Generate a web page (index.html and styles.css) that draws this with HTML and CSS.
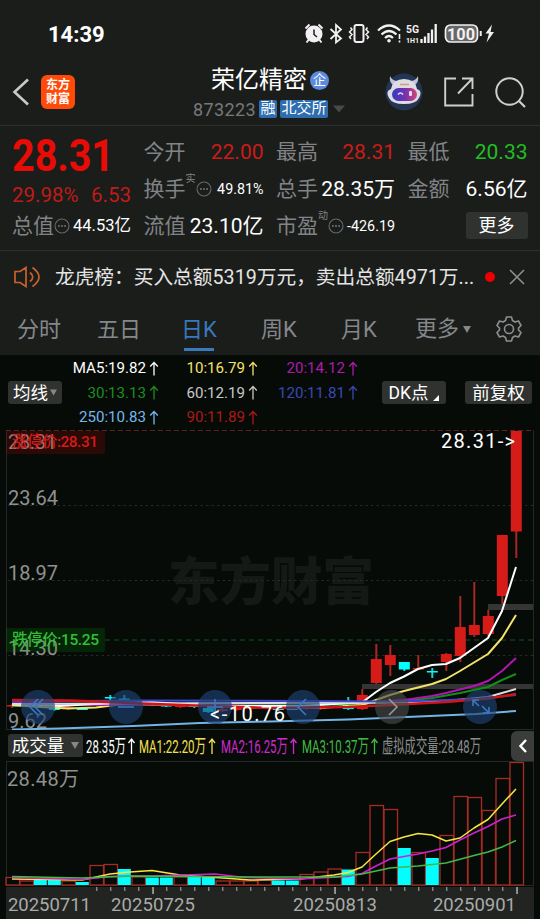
FILE: index.html
```html
<!DOCTYPE html>
<html lang="zh-CN">
<head>
    <meta charset="UTF-8">
    <meta name="viewport" content="width=device-width, initial-scale=1.0">
    <title>荣亿精密 873223</title>
    <link rel="stylesheet" href="styles.css">
</head>
<body>
    <svg class="defs" width="0" height="0">
        <symbol id="up" viewBox="0 0 10 15"><path d="M5 14.5V1.5M1.2 5.5L5 1.5L8.8 5.5" fill="none" stroke="currentColor" stroke-width="1.3"/></symbol>
        <symbol id="dots" viewBox="0 0 16 16"><circle cx="8" cy="8" r="7" fill="none" stroke="#66686a" stroke-width="1.1"/><path d="M4 7.2h1.8v1.6H4zM7.1 7.2h1.8v1.6H7.1zM10.2 7.2H12v1.6h-1.8z" fill="#77797b"/></symbol>
    </svg>

    <div class="status-bar">
        <span class="time">14:39</span>
        <svg class="status-icons" width="192" height="24" viewBox="304 22 192 24">
            <!-- alarm -->
            <circle cx="314" cy="34" r="8.5" fill="#f2f0f2"/>
            <path d="M305.5 28.5l4-4M322.5 28.5l-4-4M308.5 40l-2 2.5M319.5 40l2 2.5" stroke="#f2f0f2" stroke-width="2"/>
            <path d="M314 29.5V34.5L317 37" fill="none" stroke="#1b1d1b" stroke-width="1.5"/>
            <!-- bluetooth -->
            <path d="M330.5 29L341 38.5L336 42.500V25L341 29.5L330.5 39" fill="none" stroke="#f2f0f2" stroke-width="1.8"/>
            <!-- vibrate -->
            <rect x="354.5" y="25" width="9" height="17" rx="2" fill="none" stroke="#f2f0f2" stroke-width="2"/>
            <path d="M350.5 27.5l1.5 2-2.5 2.5 2.5 2.5-2.5 2.5 1.5 2M367.5 27.5l-1.5 2 2.5 2.5-2.5 2.5 2.5 2.5-1.5 2" fill="none" stroke="#f2f0f2" stroke-width="1.5"/>
            <!-- wifi -->
            <path d="M378 30.5Q389 20.5 400 30.5M381.5 34.5Q389 27.5 396.5 34.5M385 38Q389 34 393 38" fill="none" stroke="#f2f0f2" stroke-width="2.2"/>
            <circle cx="389" cy="40.8" r="1.8" fill="#f2f0f2"/>
            <path d="M399.5 34v5M399.5 40.5v2" stroke="#f2f0f2" stroke-width="1.6"/>
            <!-- signal -->
            <text x="406" y="33" class="net" textLength="13" lengthAdjust="spacingAndGlyphs">5G</text>
            <text x="406" y="43" class="net-small" textLength="13" lengthAdjust="spacingAndGlyphs">1H1</text>
            <path d="M421.5 39v4M425 36.5V43M428.5 33v10M432 29.5V43M435.7 24v19" stroke="#f2f0f2" stroke-width="2.3"/>
            <!-- battery -->
            <rect x="445.5" y="25" width="32" height="17" rx="5" fill="#666" stroke="#f2f0f2" stroke-width="1.7"/>
            <text x="447" y="39.5" class="battery" textLength="28" lengthAdjust="spacingAndGlyphs">100</text>
            <path d="M480.7 31v5" stroke="#f2f0f2" stroke-width="2"/>
            <path d="M492 24.5L485.5 33.5H489L486.5 42.5L494 32H490.5Z" fill="#f2f0f2"/>
        </svg>
    </div>

    <header class="header">
        <div class="header-left">
            <svg width="18" height="28" viewBox="0 0 18 28"><path d="M16 1.5L2.5 14L16 26.5" fill="none" stroke="#c9c9c9" stroke-width="2.6"/></svg>
            <div class="logo"><span>东方</span><span>财富</span></div>
        </div>
        <div class="stock">
            <div class="stock-name">荣亿精密<span class="corp">企</span></div>
            <div class="stock-code">
                <span class="code">873223</span>
                <span class="tag">融</span>
                <span class="tag wide">北交所</span>
                <svg width="12" height="8" viewBox="0 0 12 8"><path d="M0 0.5H12L6 7.5Z" fill="#48494a"/></svg>
            </div>
        </div>
        <div class="header-right">
            <svg width="38" height="38" viewBox="0 0 38 38">
                <defs><linearGradient id="visor"><stop offset="0" stop-color="#303dc0"/><stop offset="0.55" stop-color="#7931ad"/><stop offset="1" stop-color="#d34777"/></linearGradient></defs>
                <circle cx="19" cy="19" r="18.5" fill="#233554"/>
                <path d="M5 3Q4 9 8 12L13 8Q7 8 5 3ZM33 3Q34 9 30 12L25 8Q31 8 33 3Z" fill="#bfc6dc"/>
                <path d="M6 16Q8 6 19 6Q30 6 32 16Q38 18 34 25Q31 31 19 31Q7 31 4 25Q0 18 6 16Z" fill="#dedce3"/>
                <rect x="7" y="15" width="25" height="13" rx="6.5" fill="url(#visor)"/>
                <path d="M15 11.5h9" stroke="#d89b72" stroke-width="1.5"/>
                <path d="M13 21.5Q15.5 18.5 18 21.5" fill="none" stroke="#d6e4ff" stroke-width="1.6"/>
                <rect x="24" y="18" width="3" height="5" rx="1" fill="#e5ddff"/>
            </svg>
            <svg width="30" height="30" viewBox="0 0 30 30"><path d="M12 1.5H1.2V28.5H28.5V17M18 1.5H28.5V12M28 2L14 16.5" fill="none" stroke="#cfcfcf" stroke-width="1.9"/></svg>
            <svg width="31" height="31" viewBox="0 0 31 31"><circle cx="14.5" cy="14.5" r="13.2" fill="none" stroke="#cfcfcf" stroke-width="2"/><path d="M23.5 23.5L30 30" stroke="#cfcfcf" stroke-width="2.2"/></svg>
        </div>
    </header>

    <section class="quote">
        <div class="price-col">
            <svg class="price" width="119" height="44" viewBox="0 0 119 44"><text x="0" y="38" textLength="102" lengthAdjust="spacingAndGlyphs">28.31</text></svg>
            <div class="change"><span>29.98%</span><span>6.53</span></div>
            <div class="cell"><label>总值</label><svg class="dots"><use href="#dots"/></svg><span class="val mid">44.53亿</span></div>
        </div>
        <div class="col">
            <div class="cell"><label>今开</label><span class="val red">22.00</span></div>
            <div class="cell"><label>换手</label><sup>实</sup><svg class="dots"><use href="#dots"/></svg><span class="val small">49.81%</span></div>
            <div class="cell"><label>流值</label><span class="val">23.10亿</span></div>
        </div>
        <div class="col">
            <div class="cell"><label>最高</label><span class="val red">28.31</span></div>
            <div class="cell"><label>总手</label><span class="val">28.35万</span></div>
            <div class="cell"><label>市盈</label><sup>动</sup><svg class="dots"><use href="#dots"/></svg><span class="val small">-426.19</span></div>
        </div>
        <div class="col">
            <div class="cell"><label>最低</label><span class="val green">20.33</span></div>
            <div class="cell"><label>金额</label><span class="val">6.56亿</span></div>
            <div class="cell"><button class="more">更多</button></div>
        </div>
    </section>

    <div class="news">
        <svg width="27" height="22" viewBox="0 0 27 22"><path d="M12 1.5V20.5L6 16.5H1V5.5H6ZM16 6.5Q21.5 11 16 15.5M18.5 1.5Q31.5 11 18.5 20.5" fill="none" stroke="#c8622c" stroke-width="1.7"/></svg>
        <span class="news-text">龙虎榜：买入总额5319万元，卖出总额4971万...</span>
        <span class="dot"></span>
        <svg width="16" height="16" viewBox="0 0 16 16"><path d="M1 1L15 15M15 1L1 15" stroke="#929292" stroke-width="1.5"/></svg>
    </div>

    <nav class="tabs">
        <span class="tab">分时</span>
        <span class="tab">五日</span>
        <span class="tab active">日K</span>
        <span class="tab">周K</span>
        <span class="tab">月K</span>
        <span class="tab tab-more">更多<svg width="8" height="7" viewBox="0 0 8 7"><path d="M0 0H8L4 7Z" fill="#858789"/></svg></span>
        <svg class="gear" width="26" height="26" viewBox="0 0 26 26"><path d="M10.5 1H15.5L16.5 4.5L19 6L22.5 5L25 9.5L22.5 12V14L25 16.5L22.5 21L19 20L16.5 21.5L15.5 25H10.5L9.5 21.5L7 20L3.5 21L1 16.5L3.5 14V12L1 9.5L3.5 5L7 6L9.5 4.5Z" fill="none" stroke="#8c8e90" stroke-width="1.6" stroke-linejoin="round"/><circle cx="13" cy="13" r="4.5" fill="none" stroke="#8c8e90" stroke-width="1.6"/></svg>
    </nav>

    <section class="legend">
        <button class="chip">均线<svg width="7" height="7" viewBox="0 0 8 7"><path d="M0 0H8L4 7Z" fill="#858789"/></svg></button>
        <div class="ma-grid">
            <span class="white">MA5:19.82<svg><use href="#up"/></svg></span>
            <span class="yellow">10:16.79<svg><use href="#up"/></svg></span>
            <span class="magenta">20:14.12<svg><use href="#up"/></svg></span>
            <span class="dgreen">30:13.13<svg><use href="#up"/></svg></span>
            <span class="gray">60:12.19<svg><use href="#up"/></svg></span>
            <span class="blue">120:11.81<svg><use href="#up"/></svg></span>
            <span class="sky">250:10.83<svg><use href="#up"/></svg></span>
            <span class="dred">90:11.89<svg><use href="#up"/></svg></span>
        </div>
        <button class="chip dk">DK点<svg width="6" height="6" viewBox="0 0 6 6"><path d="M6 0V6H0Z" fill="#fff"/></svg></button>
        <button class="chip">前复权</button>
    </section>

    <svg class="kline" width="540" height="300" viewBox="0 430 540 300">
        <text x="168" y="600" class="watermark" textLength="206">东方财富</text>
        <path d="M6.5 430V730M533.5 430V730M6 729.5H534" stroke="#242826"/>
        <path d="M8 505.5H533M8 580.5H533M8 655.5H533" stroke="#252926" stroke-dasharray="2.5 3"/>
        <path d="M6 430.5H533" stroke="#5c2422" stroke-dasharray="5 3"/>
        <path d="M105 640H533" stroke="#0f3d10" stroke-width="1.5" stroke-dasharray="5 4"/>
        <rect x="488" y="604" width="45" height="6" fill="#343534"/>
        <rect x="362" y="684" width="171" height="5" fill="#343534"/>
        <text x="8" y="449" class="axis" textLength="49">28.31</text>
        <text x="8" y="505" class="axis" textLength="50">23.64</text>
        <text x="8" y="580" class="axis" textLength="50">18.97</text>
        <text x="8" y="655" class="axis" textLength="50">14.30</text>
        <text x="8" y="728" class="axis" textLength="39">9.62</text>
        <rect x="6" y="431" width="99" height="23" rx="2" fill="#d00000" fill-opacity="0.18"/>
        <text x="12" y="447" class="limit" fill="#d01c17" textLength="86">涨停价:28.31</text>
        <rect x="6" y="628" width="99" height="24" rx="2" fill="#00a000" fill-opacity="0.18"/>
        <text x="12" y="645" class="limit" fill="#34bd38" textLength="87">跌停价:15.25</text>
        <g id="candles"></g>
        <g fill="none" stroke-width="2" stroke-linejoin="round">
            <polyline stroke="#72b4e8" points="12,729.5 60,728.5 133,726 200,723 270,721.5 348,719.5 430,716 476,714 516,711"/>
            <polyline stroke="#109018" points="12,706 110,704 200,705 300,705 362,704 404,701 432,698 460,693 488,687 502,680 516,674"/>
            <polyline stroke="#f5e468" points="12,705 40,707 68,708.5 96,707.5 124,704 180,705 236,707 320,708 348,706 362,705 376,700 390,695 404,691 418,687.5 432,684 446,679 460,671 474,662.5 488,654 502,638 516,615"/>
            <polyline stroke="#b414b4" points="12,702 90,705 180,704 300,703 376,702 404,700 432,696 446,693 474,686 488,681 502,671 516,658"/>
            <polyline stroke="#ffffff" points="12,704 60,706 110,703 152,702 208,706 300,706 334,704 362,702.5 376,692 390,683 404,676.5 418,669 432,665 446,664 460,658 474,648 488,638 502,611 516,567"/>
            <polyline stroke="#dcdcdc" points="12,704 130,703.5 270,703 404,702.5 446,701 488,697 502,693 516,689"/>
            <polyline stroke="#3a48cf" points="12,701.5 140,700.5 300,701 390,701.5 418,701 476,699 516,695"/>
            <polyline stroke="#d01418" stroke-width="2.5" points="12,700 70,700.5 130,703 180,705 270,708 348,707 390,705 446,702 488,698.5 516,694"/>
        </g>
        <g fill="#1e4273" fill-opacity="0.65">
            <circle cx="38" cy="707" r="17"/>
            <circle cx="126" cy="707" r="17"/>
            <circle cx="215" cy="707" r="17"/>
            <circle cx="303" cy="707" r="17"/>
            <circle cx="392" cy="707" r="17" fill="#484a49"/>
            <circle cx="480" cy="707" r="17"/>
        </g>
        <g fill="none" stroke="#3979c4" stroke-width="1.6">
            <path d="M38 699L30 707L38 715M43 699L35 707L43 715"/>
            <path d="M118 707H134M207 707H223M215 699V715"/>
            <path d="M306 699L298 707L306 715"/>
            <path d="M389 699L397 707L389 715" stroke="#999"/>
            <path d="M473 706V700H479M473 700L479 706M489 707V713H483M489 713L482 706"/>
        </g>
        <text x="441" y="448" class="mark" textLength="74">28.31-&gt;</text>
        <text x="210" y="721" class="mark" textLength="75">&lt;-10.76</text>
    </svg>

    <div class="volume-bar">
        <button class="chip vol-chip">成交量<svg width="8" height="7" viewBox="0 0 8 7"><path d="M0 0H8L4 7Z" fill="#858789"/></svg></button>
        <svg class="vol-values" width="400" height="26" viewBox="85 0 400 26">
            <text x="86" y="20" fill="#fff" textLength="40" lengthAdjust="spacingAndGlyphs">28.35万</text>
            <text x="139" y="20" fill="#f5e050" textLength="67" lengthAdjust="spacingAndGlyphs">MA1:22.20万</text>
            <text x="221" y="20" fill="#cf28cf" textLength="67" lengthAdjust="spacingAndGlyphs">MA2:16.25万</text>
            <text x="302" y="20" fill="#42b944" textLength="67" lengthAdjust="spacingAndGlyphs">MA3:10.37万</text>
            <text x="382" y="20" fill="#8b8d8c" textLength="99" lengthAdjust="spacingAndGlyphs">虚拟成交量:28.48万</text>
            <g fill="none" stroke-width="1.3">
                <path d="M131.5 21V6M128.5 10L131.5 6L134.5 10" stroke="#fff"/>
                <path d="M212 21V6M209 10L212 6L215 10" stroke="#f5e050"/>
                <path d="M293.5 21V6M290.5 10L293.5 6L296.5 10" stroke="#cf28cf"/>
                <path d="M374.5 21V6M371.5 10L374.5 6L377.5 10" stroke="#42b944"/>
            </g>
        </svg>
        <div class="collapse"><svg width="8" height="14" viewBox="0 0 8 14"><path d="M7 1L1.5 7L7 13" fill="none" stroke="#fff" stroke-width="2.4"/></svg></div>
    </div>

    <svg class="volume" width="540" height="125" viewBox="0 761 540 125">
        <path d="M6.5 761V886M533.5 761V886M6 761.5H534M6 885.5H534" stroke="#242826"/>
        <text x="7" y="786" class="axis" textLength="72">28.48万</text>
        <g id="bars"></g>
        <g fill="none" stroke-width="1.5" stroke-linejoin="round">
            <polyline stroke="#f5e640" points="12,879 82,880 110,874 130,872 152,870.5 180,875 230,878.5 250,880 300,879 334,875 348,872.5 362,867 376,854 390,841.5 404,837 418,833.5 432,835 446,841 460,838 474,828 488,819.5 502,804 516,789"/>
            <polyline stroke="#cf22cf" points="12,877.5 82,879.5 110,876.5 152,876 215,874 245,877.5 300,879 348,876.5 362,873.5 376,866 390,859 418,854 432,851 446,847.5 460,840 474,833 488,826.5 502,819 516,815"/>
            <polyline stroke="#43b94a" points="12,876.5 82,878 130,876 270,877 334,877 362,874 390,868 418,866 446,863 474,855.5 488,852 502,847 516,840.5"/>
        </g>
    </svg>

    <svg class="dates" width="540" height="33" viewBox="0 886 540 33">
        <rect x="6" y="887" width="528" height="32" fill="#222422"/>
        <g id="ticks"></g>
        <text x="8" y="911" textLength="83">20250711</text>
        <text x="111" y="911" textLength="84">20250725</text>
        <text x="293" y="911" textLength="84">20250813</text>
        <text x="433" y="911" textLength="83">20250901</text>
    </svg>

    <script>
        const RED = '#d61c18';
        const CYAN = '#00ffff';
        const START = 12.3;
        const STEP = 14;

        // [color, body top, body bottom, wick top, wick bottom]
        const candles = [
            ['r', 705, 706.5, 704, 708], ['r', 704, 706, 703, 707], ['r', 705, 707, 704, 708],
            ['c', 708, 710, 706, 711], ['r', 707, 709, 706, 710], ['c', 708, 710, 707, 710],
            ['r', 701, 704, 700, 706], ['c', 697, 698.5, 695, 700], ['c', 698.5, 700, 695, 701],
            ['r', 702, 704, 701, 706], ['c', 703, 705, 702, 706], ['c', 705, 706.5, 704, 707],
            ['r', 705, 707, 704, 708], ['c', 705, 707, 704, 708], ['c', 708, 712, 706, 713],
            ['r', 709, 711, 707, 712], ['r', 708, 710, 706, 711], ['r', 706, 709, 705, 710],
            ['r', 706, 708, 705, 709], ['c', 708, 710, 707, 711], ['c', 708, 710, 706, 710],
            ['r', 706, 709, 704, 710], ['r', 706, 709, 703, 710], ['r', 702, 704, 701, 708],
            ['c', 702, 709, 697, 710], ['r', 695, 709, 689, 710], ['r', 659, 683, 644, 684],
            ['r', 655, 665, 645, 676], ['c', 662, 669.5, 662, 671], ['r', 668, 669.5, 655, 670],
            ['c', 671, 672.5, 668, 678], ['r', 654, 662, 653, 671], ['r', 627, 656, 596, 662],
            ['r', 625, 635, 582, 637], ['r', 616, 634, 610, 636], ['r', 535, 596, 535, 604],
            ['r', 431, 531.5, 431, 558]
        ];

        const volumes = [
            ['r', 877.5], ['r', 881], ['c', 880], ['c', 880], ['r', 881], ['c', 882], ['r', 865.5],
            ['r', 864.5], ['c', 869], ['r', 877], ['c', 877.5], ['c', 877.5], ['r', 877], ['c', 877],
            ['c', 877], ['r', 881], ['r', 881], ['r', 881], ['r', 880], ['c', 880.5], ['c', 880.5],
            ['r', 874.5], ['r', 872], ['r', 869], ['c', 869.5], ['r', 852.5], ['r', 805.5],
            ['r', 809.5], ['c', 848], ['r', 852.5], ['c', 858], ['r', 835.5], ['r', 796.5],
            ['r', 797.5], ['r', 810.5], ['r', 778.5], ['r', 762.5]
        ];

        document.getElementById('candles').innerHTML = candles.map(([type, top, bottom, high, low], i) => {
            const x = START + i * STEP;
            const color = type === 'r' ? RED : CYAN;
            const wick = type === 'r' ? '#a82722' : '#25c8d0';
            return `<rect x="${x - 1}" y="${high}" width="2" height="${low - high}" fill="${wick}"/>
                <rect x="${x - 5.5}" y="${top}" width="11" height="${bottom - top}" fill="${color}"/>`;
        }).join('');

        document.getElementById('bars').innerHTML = volumes.map(([type, top], i) => {
            const x = START + i * STEP - 6.5;
            return type === 'r'
                ? `<rect x="${x + 0.2}" y="${top}" width="13.5" height="${885 - top}" fill="none" stroke="#a62b24" stroke-width="1.3"/>`
                : `<rect x="${x}" y="${top}" width="13" height="${885 - top}" fill="${CYAN}"/>`;
        }).join('');

        let ticks = '';
        for (let i = 6; i < 37; i++) {
            const major = i === 10 || i === 23 || i === 36;
            ticks += `<rect x="${START + i * STEP}" y="887" width="${major ? 1.5 : 1}" height="${major ? 7 : 4}" fill="#b0b2b0"/>`;
        }
        document.getElementById('ticks').innerHTML = ticks;
    </script>
</body>
</html>
```
FILE: styles.css
```css
* {
    box-sizing: border-box;
}
body {
    margin: 0;
    width: 540px;
    height: 919px;
    overflow: hidden;
    background-color: #1b1d1b;
    color: #fff;
    font-family: Roboto, "Noto Sans CJK SC", sans-serif;
}
svg {
    display: block;
    flex-shrink: 0;
}
.defs {
    display: none;
}
button {
    border: none;
    padding: 0;
    color: #fff;
    font-family: inherit;
}

/* status bar */
.status-bar {
    display: flex;
    justify-content: space-between;
    align-items: center;
    height: 68px;
    padding: 0 44px 0 48px;
}
.time {
    font-size: 22px;
    font-weight: 700;
}
.net {
    font-size: 11px;
    font-weight: 700;
    fill: #f2f0f2;
}
.net-small {
    font-size: 8px;
    font-weight: 700;
    fill: #f2f0f2;
}
.battery {
    font-size: 16px;
    font-weight: 700;
    fill: #f2f0f2;
}

/* header */
.header {
    display: flex;
    justify-content: space-between;
    height: 57px;
    padding: 0 14px 0 12px;
}
.header-left {
    display: flex;
    align-items: center;
    gap: 11px;
    width: 170px;
    height: 48px;
}
.logo {
    display: flex;
    flex-direction: column;
    justify-content: center;
    align-items: center;
    width: 34px;
    height: 34px;
    border-radius: 6px;
    background-color: #ff4a08;
    font-size: 12px;
    font-weight: 700;
    line-height: 14px;
}
.stock {
    width: 180px;
}
.stock-name {
    display: flex;
    align-items: center;
    height: 26px;
    padding-left: 29px;
    font-size: 24px;
    line-height: 24px;
    padding-bottom: 2px;
    white-space: nowrap;
}
.corp {
    width: 19px;
    height: 19px;
    margin-left: 3px;
    border-radius: 50%;
    background-color: #5b8ade;
    font-size: 13px;
    line-height: 18px;
    text-align: center;
}
.stock-code {
    display: flex;
    align-items: center;
    gap: 3px;
    height: 30px;
    padding-left: 11px;
}
.code {
    width: 63px;
    color: #77797b;
    font-size: 18px;
    letter-spacing: 0.4px;
}
.tag {
    width: 18px;
    height: 18px;
    border-radius: 2px;
    background-color: #2d6db0;
    font-size: 15px;
    line-height: 17px;
    text-align: center;
}
.tag.wide {
    width: 48px;
    margin-right: 2px;
}
.header-right {
    display: flex;
    align-items: center;
    justify-content: flex-end;
    gap: 21px;
    width: 164px;
    height: 48px;
}

/* quote */
.quote {
    display: grid;
    grid-template-columns: 119px 120px 119px 120px;
    column-gap: 12.5px;
    height: 126px;
    padding: 7px 12px 0;
    border-top: 1px solid #2d302e;
    border-bottom: 1px solid #2d302e;
}
.col {
    display: grid;
    grid-template-rows: 37px 37px 37px;
}
.price-col {
    display: grid;
    grid-template-rows: 44px 30px 37px;
}
.price text {
    fill: #e80b06;
    font-size: 44px;
    font-weight: 700;
}
.change {
    display: flex;
    justify-content: space-between;
    align-items: center;
    padding-top: 5px;
    color: #bf1b17;
    font-size: 20.5px;
}
.cell {
    display: flex;
    align-items: center;
    white-space: nowrap;
}
.cell label {
    color: #818386;
    font-size: 21px;
    line-height: 30px;
}
.cell sup {
    align-self: flex-start;
    color: #818386;
    font-size: 10px;
    line-height: 18px;
}
.dots {
    width: 16px;
    height: 16px;
}
.val {
    margin-left: auto;
    font-size: 21px;
    line-height: 30px;
}
.mid {
    font-size: 16.5px;
}
.small {
    font-size: 14.3px;
}
.red {
    color: #c91c17;
}
.green {
    color: #22bd22;
}
.more {
    width: 62px;
    height: 27px;
    margin-left: auto;
    border-radius: 3px;
    background-color: #303230;
    font-size: 18px;
    line-height: 26px;
}

/* news */
.news {
    display: flex;
    align-items: center;
    height: 52px;
    padding: 0 15px 0 14px;
}
.news-text {
    width: 422px;
    margin-left: 14px;
    padding-bottom: 3px;
    color: #e4e5e4;
    font-size: 19.7px;
    white-space: nowrap;
}
.dot {
    width: 10px;
    height: 10px;
    margin: 0 14px 0 9px;
    border-radius: 50%;
    background-color: #ef0000;
}

/* period tabs */
.tabs {
    display: flex;
    height: 52px;
    color: #85878a;
    font-size: 22px;
    line-height: 54px;
}
.tab {
    width: 80px;
    text-align: center;
    text-indent: -2px;
    white-space: nowrap;
}
.tab.active {
    color: #3979bc;
    background: linear-gradient(#3979bc, #3979bc) 24px 45px / 30px 3px no-repeat;
}
.tab-more {
    display: flex;
    align-items: center;
    gap: 4px;
    width: 96px;
    padding-left: 17px;
}
.gear {
    margin-top: 13px;
}

/* moving averages */
.legend {
    display: flex;
    align-items: center;
    height: 75px;
    padding: 0 8px;
    background-color: #070b08;
}
.chip {
    display: flex;
    justify-content: center;
    align-items: center;
    gap: 2px;
    width: 54px;
    height: 23px;
    border-radius: 3px;
    background-color: #303230;
    font-size: 17.5px;
    line-height: 22px;
    white-space: nowrap;
}
.legend .chip:last-child {
    width: 67px;
    margin-left: 19px;
}
.legend .dk {
    width: 64px;
    gap: 5px;
    margin-left: 24px;
}
.dk svg {
    margin-top: 11px;
}
.ma-grid {
    display: grid;
    grid-template-columns: 97px 99px 100px;
    grid-auto-rows: 24.5px;
    font-size: 15.1px;
}
.ma-grid span {
    display: flex;
    justify-content: flex-end;
    align-items: center;
    gap: 3px;
}
.ma-grid svg {
    width: 10px;
    height: 15px;
}
.white {
    color: #fff;
}
.yellow {
    color: #f5e268;
}
.magenta {
    color: #ad1bad;
}
.dgreen {
    color: #1c8d20;
}
.gray {
    color: #c8c9c8;
}
.blue {
    color: #3749b5;
}
.sky {
    color: #74b7ed;
}
.dred {
    color: #ad1916;
}

/* charts */
.kline,
.volume,
.dates {
    background-color: #070b08;
}
.watermark {
    fill: #151916;
    font-size: 51.5px;
    font-weight: 900;
}
.axis {
    fill: #8f918f;
    font-size: 20px;
}
.limit {
    font-size: 15.5px;
    font-weight: 500;
}
.mark {
    fill: #fff;
    font-size: 20px;
}
.dates text {
    fill: #a9aba9;
    font-size: 18.5px;
}
.volume-bar {
    display: flex;
    align-items: center;
    height: 31px;
    padding-left: 8px;
    background-color: #070b08;
}
.vol-chip {
    width: 75px;
    gap: 7px;
}
.vol-values {
    margin-left: 2px;
}
.vol-values text {
    font-size: 19px;
}
.collapse {
    display: flex;
    align-items: center;
    justify-content: center;
    width: 23px;
    height: 30px;
    margin-left: 26px;
    border-radius: 6px 0 0 6px;
    background-color: #3b3d3b;
}
```
